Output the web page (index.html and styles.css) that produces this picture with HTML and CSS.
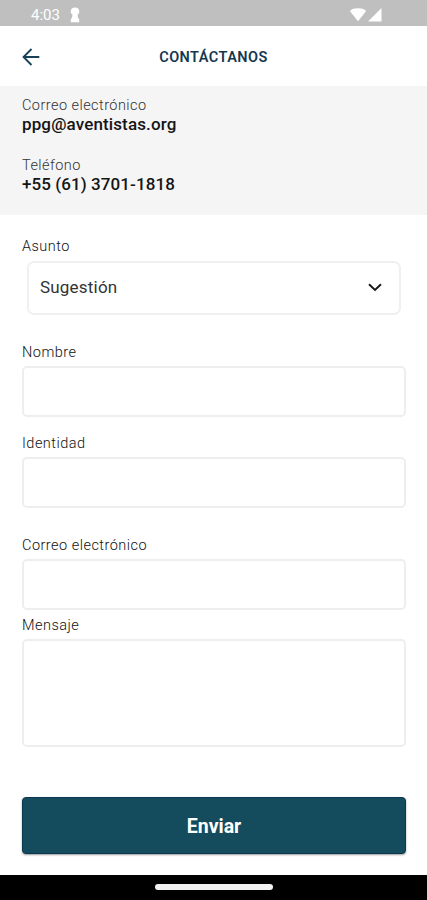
FILE: index.html
```html
<!DOCTYPE html>
<html lang="es">
<head>
<meta charset="utf-8">
<title>Contáctanos</title>
<link rel="stylesheet" href="styles.css">
</head>
<body>
<div class="status">
  <span class="time">4:03</span>
  <svg class="keyhole" width="10" height="16" viewBox="0 0 10 16"><path d="M5 .6C2.500.6.7 2.200.7 4.500C.7 6 1.500 7 2.500 7.600L2 11L.8 12V15.300H9.200V12L8 11L7.500 7.600C8.500 7 9.300 6 9.300 4.500C9.300 2.200 7.500.6 5 .6Z" fill="#fff"/></svg>
  <svg class="signals" width="33" height="16" viewBox="0 0 33 16"><path d="M0 4.200Q1.200 1.200 8 1.200T16 4.200L8 14.200Z" fill="#fff"/><path d="M31.500 1V14.500H18Z" fill="#fff"/></svg>
</div>
<header class="header">
  <svg class="back" width="18" height="18" viewBox="0 0 18 18"><path d="M17.300 9H1.500M9.500 1L1.500 9L9.500 17" fill="none" stroke="#174059" stroke-width="1.800"/></svg>
  <h1 class="title">CONTÁCTANOS</h1>
</header>
<section class="info">
  <div class="caption">Correo electrónico</div>
  <div class="value email">ppg@aventistas.org</div>
  <div class="caption second">Teléfono</div>
  <div class="value phone">+55 (61) 3701-1818</div>
</section>
<main class="form">
  <div class="label asunto">Asunto</div>
  <div class="select"><span>Sugestión</span>
    <svg width="14" height="9" viewBox="0 0 14 9"><path d="M1 1.300L7 7L13 1.300" fill="none" stroke="#171717" stroke-width="1.900"/></svg>
  </div>
  <div class="label nombre">Nombre</div>
  <div class="input"></div>
  <div class="label identidad">Identidad</div>
  <div class="input"></div>
  <div class="label correo">Correo electrónico</div>
  <div class="input"></div>
  <div class="label mensaje">Mensaje</div>
  <div class="input area"></div>
  <button class="send">Enviar</button>
</main>
<footer class="nav"><span class="pill"></span></footer>
</body>
</html>
```
FILE: styles.css
```css
* { box-sizing: border-box; }
body {
  margin: 0;
  height: 900px;
  display: flex;
  flex-direction: column;
  overflow: hidden;
  background: #fff;
  color: #333;
  font-family: Roboto, "Liberation Sans", sans-serif;
}
svg { display: block; flex: none; }
.status {
  height: 26px;
  flex: none;
  display: flex;
  align-items: center;
  padding: 3px 44px 0 31px;
  background: #bfbfbf;
  color: #fff;
}
.time { width: 39px; font-size: 15px; line-height: 18px; }
.signals { margin-left: auto; }
.header {
  height: 60px;
  flex: none;
  display: grid;
  grid-template-columns: 22px 1fr 22px;
  align-items: center;
  padding-top: 2px;
}
.back { margin-left: 22px; }
.title {
  margin: 0;
  text-align: center;
  font-size: 14.500px;
  font-weight: 600;
  letter-spacing: .45px;
  color: #15384f;
}
.info {
  height: 129px;
  flex: none;
  padding: 11px 22px 0;
  background: #f5f5f5;
}
.caption { font-size: 14.500px; line-height: 18px; font-weight: 300; letter-spacing: .45px; color: #333; }
.second { margin-top: 24px; }
.value { font-size: 17px; line-height: 18px; font-weight: 500; color: #151515; }
.email { letter-spacing: .13px; }
.phone { letter-spacing: .08px; }
.form {
  height: 660px;
  flex: none;
  display: flex;
  flex-direction: column;
  padding: 23px 21px 0 22px;
}
.label { height: 18px; flex: none; margin-bottom: 4px; font-size: 14.500px; line-height: 18px; letter-spacing: .48px; font-weight: 300; color: #111; }
.select {
  height: 54px;
  flex: none;
  margin: 1px 5px 29px;
  padding: 0 17px 1px 11px;
  display: flex;
  align-items: center;
  justify-content: space-between;
  border: 2px solid #f0f0f0;
  border-radius: 7px;
  font-size: 17px;
  letter-spacing: .2px;
}
.select span { padding-bottom: 2px; }
.input {
  height: 51px;
  flex: none;
  border: 2px solid #eee;
  border-radius: 5px;
}
.identidad { margin-top: 18px; }
.correo { margin-top: 29px; }
.mensaje { margin-top: 7px; }
.area { height: 108px; }
.send {
  height: 57px;
  flex: none;
  margin-top: 50px;
  padding: 1px 0 0;
  border: 1px solid #0b3851;
  border-radius: 4px;
  background: #144c5e;
  color: #fff;
  font: 700 19.500px Roboto, "Liberation Sans", sans-serif;
  box-shadow: 0 1px 2px #0006;
}
.nav {
  height: 25px;
  flex: none;
  display: flex;
  justify-content: center;
  padding-top: 9px;
  background: #000;
}
.pill { width: 118px; height: 6px; border-radius: 3px; background: #f2f2f2; }
```
